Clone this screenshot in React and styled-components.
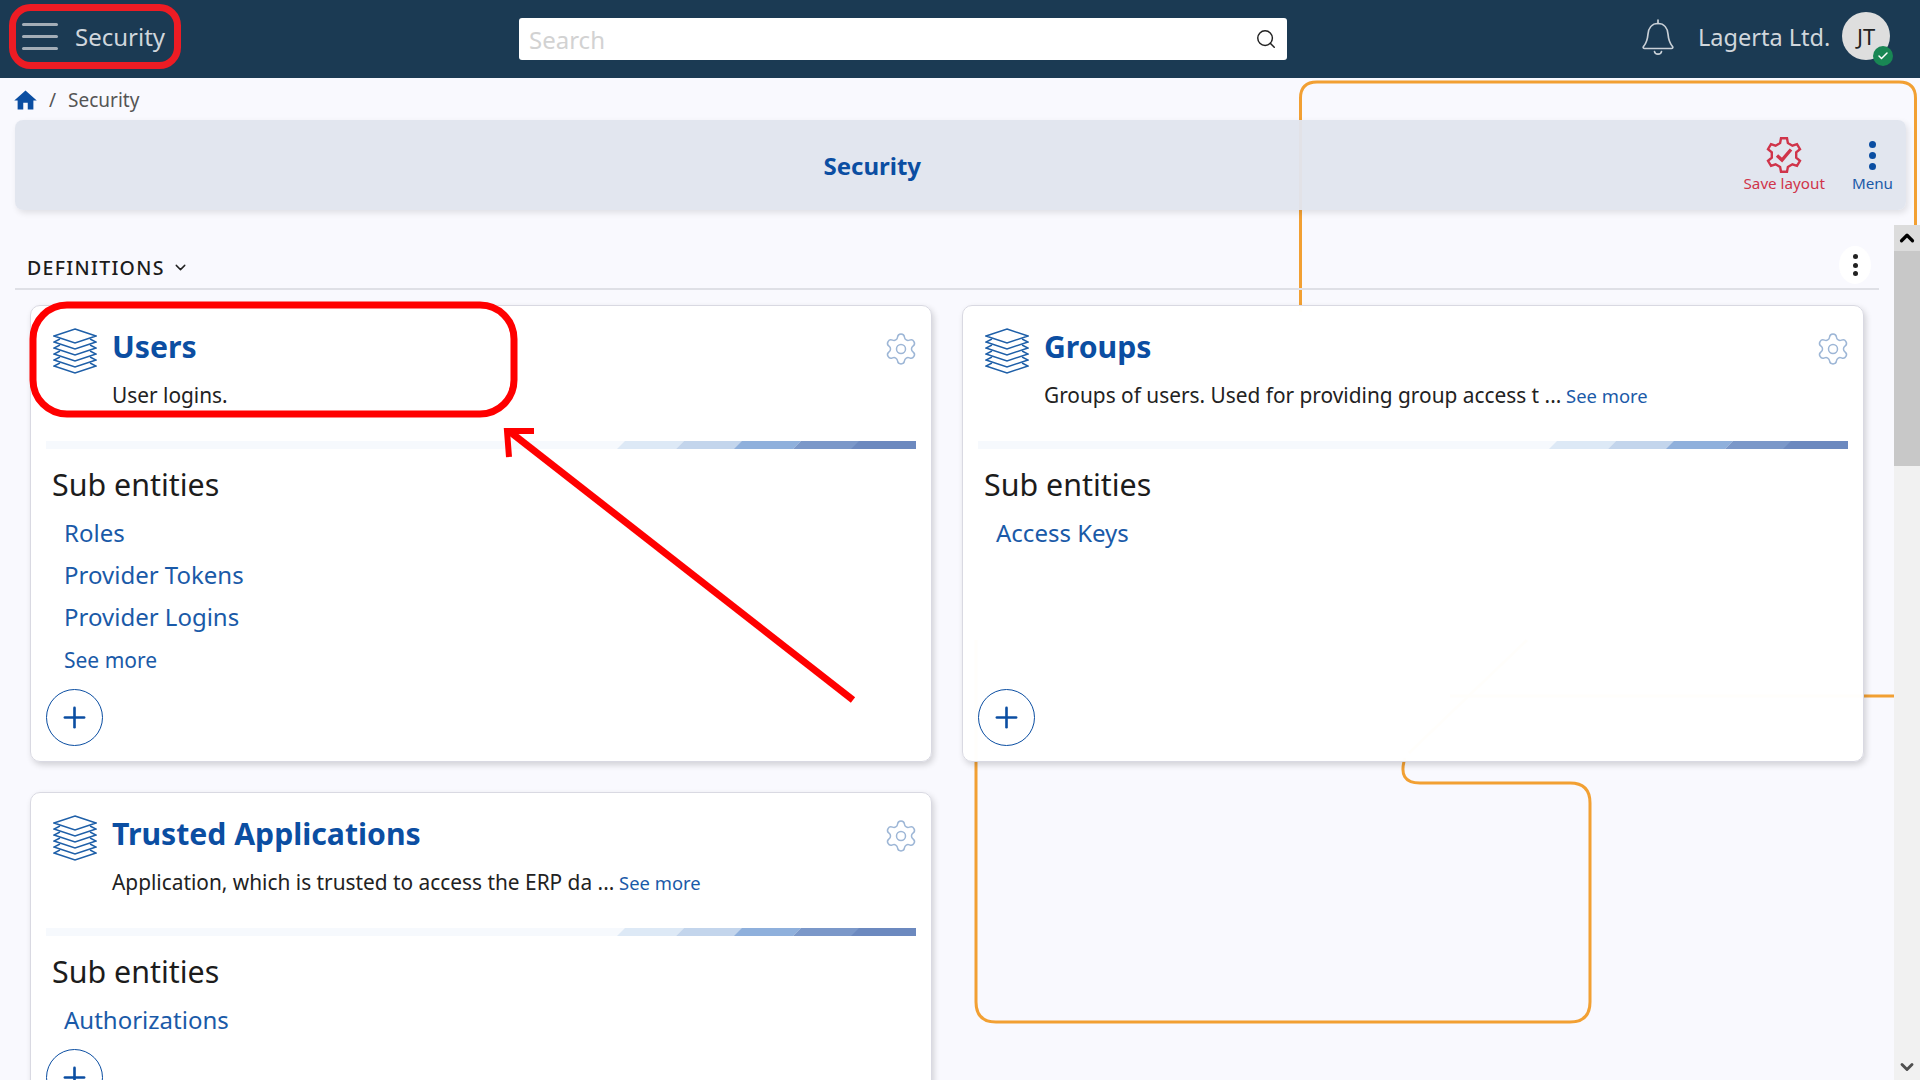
import styled, { createGlobalStyle } from 'styled-components'
import { MdHome } from 'react-icons/md'
import { Search, Settings, Plus, ChevronDown, ChevronUp, Check } from 'lucide-react'

const BLUE = '#0b4ea2'

const GlobalStyle = createGlobalStyle`
  html, body {
    margin: 0;
    padding: 0;
    height: 100%;
    overflow: hidden;
    background: #f9f9fe;
    font-family: "Noto Sans", "Open Sans", sans-serif;
  }
`

// gear outline for the save button, six square teeth
const gearPoints = () => {
  const pts = []
  for (let i = 0; i < 6; i++) {
    const a = (i * 60 - 90) * (Math.PI / 180)
    const add = (r, d) => {
      const t = a + (d * Math.PI) / 180
      pts.push(`${(18 + r * Math.cos(t)).toFixed(1)},${(18 + r * Math.sin(t)).toFixed(1)}`)
    }
    add(12.5, -18)
    add(17, -10)
    add(17, 10)
    add(12.5, 18)
  }
  return pts.join(' ')
}

const StackIcon = () => (
  <StackSvg viewBox="0 0 44 46" fill="none" stroke="#1e5fa8" strokeWidth="1.4">
    <path d="M22 1 L43 8 L22 15 L1 8 Z" />
    <path d="M7 11 L1 14 L22 21 L43 14 L37 11" />
    <path d="M7 17 L1 20 L22 27 L43 20 L37 17" />
    <path d="M7 23 L1 26 L22 33 L43 26 L37 23" />
    <path d="M7 29 L1 32 L22 39 L43 32 L37 29" />
    <path d="M7 35 L1 38 L22 45 L43 38 L37 35" />
  </StackSvg>
)

const BellIcon = () => (
  <BellSvg viewBox="0 0 32 37" fill="none" stroke="#c9d0d7" strokeWidth="1.7" strokeLinecap="round" strokeLinejoin="round">
    <path d="M16 1 V4.5" />
    <path d="M16 4.5 C9.5 4.5 6.5 9.5 6 15 C5.5 21 4.5 24 1.5 27.5 C0.8 28.5 1.4 29.5 2.5 29.5 H29.5 C30.6 29.5 31.2 28.5 30.5 27.5 C27.5 24 26.5 21 26 15 C25.5 9.5 22.5 4.5 16 4.5 Z" />
    <path d="M12.5 32.5 C13 36 19 36 19.5 32.5" />
  </BellSvg>
)

const Card = ({ title, description, links, seeMore }) => (
  <CardBox>
    <CardHead>
      <StackIcon />
      <CardText>
        <CardTitle>{title}</CardTitle>
        <CardDesc>
          {description}
          {description.endsWith('...') && <InlineMore> See more</InlineMore>}
        </CardDesc>
      </CardText>
      <GearButton>
        <Settings size={36} strokeWidth={1} color="#9db6d6" />
      </GearButton>
    </CardHead>
    <Stripe>
      <StripeStep $tone="#dde9f6" />
      <StripeStep $tone="#c3d5ec" />
      <StripeStep $tone="#8fb0dc" />
      <StripeStep $tone="#7b98c9" />
      <StripeStep $tone="#6c89bf" />
    </Stripe>
    <SubTitle>Sub entities</SubTitle>
    <LinkList>
      {links.map((l) => (
        <SubLink key={l}>{l}</SubLink>
      ))}
      {seeMore && <SeeMore>See more</SeeMore>}
    </LinkList>
    <AddButton>
      <Plus size={33} strokeWidth={1.9} color={BLUE} />
    </AddButton>
  </CardBox>
)

function App() {
  return (
    <Page>
      <GlobalStyle />
      <OrangeLines viewBox="0 0 1920 1080" fill="none" stroke="#f2a033" strokeWidth="3">
        <path d="M1915.5 240 V98 Q1915.5 82 1899 82 H1317 Q1300.5 82 1300.5 98 V312" />
        <path d="M1894 696 H1450" />
        <path d="M1527 640 L1409 753" />
        <path d="M1405 758 Q1397 783 1420 783 H1570 Q1590 783 1590 803 V1002 Q1590 1022 1570 1022 H996 Q976 1022 976 1002 V640" />
      </OrangeLines>

      <TopBar>
        <TopLeft>
          <Burger>
            <span />
            <span />
            <span />
          </Burger>
          <AppName>Security</AppName>
        </TopLeft>
        <SearchBox>
          <SearchText>Search</SearchText>
          <Search size={22} strokeWidth={1.6} color="#222" />
        </SearchBox>
        <TopRight>
          <BellIcon />
          <Company>Lagerta Ltd.</Company>
          <Avatar>
            JT
            <AvatarBadge>
              <Check size={12} strokeWidth={3} color="#fff" />
            </AvatarBadge>
          </Avatar>
        </TopRight>
      </TopBar>

      <Breadcrumb>
        <MdHome size={27} color={BLUE} />
        <Slash>/</Slash>
        <Crumb>Security</Crumb>
      </Breadcrumb>

      <TitleBar>
        <PageTitle>Security</PageTitle>
        <Actions>
          <ActionButton $color="#d0344a">
            <IconSlot>
              <svg width="36" height="36" viewBox="0 0 36 36" fill="none">
                <polygon points={gearPoints()} stroke="#d0344a" strokeWidth="2.4" strokeLinejoin="miter" />
                <path d="M11 18.5 L16 23 L25 12.5" stroke="#d0344a" strokeWidth="3.4" />
              </svg>
            </IconSlot>
            <ActionLabel>Save layout</ActionLabel>
          </ActionButton>
          <ActionButton $color="#1a5aa8">
            <IconSlot>
              <MenuDots $size={7} $gap={4} $color={BLUE}>
                <i />
                <i />
                <i />
              </MenuDots>
            </IconSlot>
            <ActionLabel>Menu</ActionLabel>
          </ActionButton>
        </Actions>
      </TitleBar>

      <ScrollArea>
        <Content>
          <SectionRow>
            <SectionName>
              DEFINITIONS
              <ChevronDown size={17} strokeWidth={2} color="#222" />
            </SectionName>
            <SectionMenu>
              <MenuDots $size={5} $gap={3.5} $color="#222">
                <i />
                <i />
                <i />
              </MenuDots>
            </SectionMenu>
          </SectionRow>
          <CardGrid>
            <Card title="Users" description="User logins." links={['Roles', 'Provider Tokens', 'Provider Logins']} seeMore />
            <Card title="Groups" description="Groups of users. Used for providing group access t ..." links={['Access Keys']} />
            <Card title="Trusted Applications" description="Application, which is trusted to access the ERP da ..." links={['Authorizations']} />
          </CardGrid>
        </Content>
        <ScrollBar>
          <ScrollEnd $bg="#dcdcdc">
            <ChevronUp size={22} strokeWidth={3.5} color="#000" />
          </ScrollEnd>
          <ScrollThumb />
          <ScrollTrack />
          <ScrollEnd $bg="#f1f1f1">
            <ChevronDown size={20} strokeWidth={3.5} color="#505050" />
          </ScrollEnd>
        </ScrollBar>
      </ScrollArea>

      <Annotations viewBox="0 0 1920 1080" fill="none">
        <rect x="12.5" y="7.5" width="165" height="58" rx="18" stroke="#ed1c24" strokeWidth="7" />
        <rect x="33" y="305" width="481" height="109" rx="34" stroke="#ff0000" strokeWidth="7" />
        <path d="M853 700 L509 431" stroke="#ff0000" strokeWidth="7" />
        <path d="M534 431 H507 L509 457" stroke="#ff0000" strokeWidth="6" />
      </Annotations>
    </Page>
  )
}

const Page = styled.div`
  position: relative;
  display: flex;
  flex-direction: column;
  width: 1920px;
  height: 1080px;
  overflow: hidden;
`

const OrangeLines = styled.svg`
  position: absolute;
  inset: 0;
  width: 1920px;
  height: 1080px;
  z-index: 0;
`

const Annotations = styled.svg`
  position: absolute;
  inset: 0;
  width: 1920px;
  height: 1080px;
  z-index: 5;
  pointer-events: none;
`

const TopBar = styled.header`
  position: relative;
  z-index: 1;
  flex: 0 0 78px;
  display: flex;
  align-items: center;
  background: #1b3a53;
  color: #d0d6dc;
`

const TopLeft = styled.div`
  display: flex;
  align-items: center;
  width: 519px;
  padding-left: 22px;
  box-sizing: border-box;
  gap: 17px;
  margin-top: -5px;
`

const Burger = styled.div`
  display: flex;
  flex-direction: column;
  gap: 9px;
  width: 36px;
  span {
    display: block;
    height: 3px;
    border-radius: 2px;
    background: #a3adb7;
  }
`

const AppName = styled.div`
  font-size: 24px;
  line-height: 32px;
`

const SearchBox = styled.div`
  display: flex;
  align-items: center;
  justify-content: space-between;
  width: 768px;
  height: 42px;
  box-sizing: border-box;
  padding: 0 10px;
  background: #fff;
  border-radius: 3px;
`

const SearchText = styled.span`
  font-size: 24px;
  color: #d2d2d2;
`

const TopRight = styled.div`
  flex: 1;
  display: flex;
  align-items: center;
  padding-left: 355px;
  margin-top: -6px;
`

const BellSvg = styled.svg`
  width: 32px;
  height: 37px;
  flex: none;
  margin-top: 3px;
`

const Company = styled.div`
  font-size: 23.5px;
  margin: 1px 0 0 24px;
  white-space: nowrap;
`

const Avatar = styled.div`
  position: relative;
  flex: none;
  width: 48px;
  height: 48px;
  margin-left: 12px;
  border-radius: 50%;
  background: #dedede;
  color: #222;
  font-size: 22px;
  display: flex;
  align-items: center;
  justify-content: center;
`

const AvatarBadge = styled.span`
  position: absolute;
  right: -3px;
  bottom: -6px;
  width: 20px;
  height: 20px;
  border-radius: 50%;
  background: #198754;
  display: flex;
  align-items: center;
  justify-content: center;
`

const Breadcrumb = styled.nav`
  position: relative;
  z-index: 1;
  flex: 0 0 42px;
  display: flex;
  align-items: center;
  padding: 2px 0 0 12px;
  box-sizing: border-box;
  font-size: 19px;
  color: #555;
`

const Slash = styled.span`
  margin: 0 12px 0 10px;
`

const Crumb = styled.span``

const TitleBar = styled.div`
  position: relative;
  z-index: 1;
  flex: 0 0 90px;
  margin: 0 14px 0 15px;
  display: flex;
  align-items: center;
  border-radius: 8px;
  background: rgba(225, 229, 238, 0.96);
  box-shadow: 2px 3px 6px rgba(0, 0, 0, 0.1);
`

const PageTitle = styled.h1`
  flex: 1;
  margin: 0;
  text-align: center;
  font-size: 24px;
  font-weight: 700;
  color: ${BLUE};
`

const Actions = styled.div`
  display: flex;
  align-items: flex-start;
  gap: 27px;
  padding: 0 13px 0 14px;
`

const ActionButton = styled.div`
  display: flex;
  flex-direction: column;
  align-items: center;
  color: ${(p) => p.$color};
`

const IconSlot = styled.div`
  height: 36px;
  display: flex;
  align-items: center;
  justify-content: center;
`

const ActionLabel = styled.span`
  font-size: 15.2px;
  line-height: 20px;
  white-space: nowrap;
`

const MenuDots = styled.div`
  display: flex;
  flex-direction: column;
  align-items: center;
  gap: ${(p) => p.$gap}px;
  i {
    display: block;
    width: ${(p) => p.$size}px;
    height: ${(p) => p.$size}px;
    border-radius: 50%;
    background: ${(p) => p.$color};
  }
`

const ScrollArea = styled.div`
  position: relative;
  z-index: 1;
  flex: 1;
  margin-top: 15px;
  display: flex;
  min-height: 0;
`

const Content = styled.main`
  flex: 1;
  min-width: 0;
  overflow: hidden;
  padding-left: 15px;
`

const SectionRow = styled.div`
  height: 65px;
  width: 1864px;
  display: flex;
  align-items: flex-end;
  justify-content: space-between;
  padding: 0 8px 4px 12px;
  box-sizing: border-box;
  border-bottom: 2px solid #dfe0e6;
`

const SectionName = styled.div`
  display: flex;
  align-items: center;
  gap: 7px;
  height: 32px;
  margin-bottom: 1px;
  font-size: 19.5px;
  font-weight: 500;
  letter-spacing: 1.3px;
  color: #1c1c1c;
`

const SectionMenu = styled.div`
  width: 32px;
  height: 38px;
  border-radius: 50%;
  background: #fff;
  display: flex;
  align-items: center;
  justify-content: center;
`

const CardGrid = styled.div`
  display: grid;
  grid-template-columns: 902px 902px;
  column-gap: 30px;
  row-gap: 30px;
  margin: 15px 0 0 15px;
`

const CardBox = styled.section`
  display: flex;
  flex-direction: column;
  box-sizing: border-box;
  padding: 0 15px 15px;
  background: rgba(255, 255, 255, 0.985);
  border: 1px solid #d9d9e2;
  border-radius: 10px;
  box-shadow: 2px 3px 6px rgba(0, 0, 0, 0.16);
`

const CardHead = styled.div`
  display: flex;
  align-items: flex-start;
  height: 135px;
  padding-top: 22px;
  box-sizing: border-box;
  flex: none;
`

const StackSvg = styled.svg`
  flex: none;
  width: 44px;
  height: 46px;
  margin: 0 0 0 7px;
`

const CardText = styled.div`
  flex: 1;
  min-width: 0;
  margin-left: 15px;
`

const CardTitle = styled.h2`
  margin: 0;
  font-size: 30.2px;
  line-height: 38px;
  font-weight: 700;
  color: ${BLUE};
`

const CardDesc = styled.p`
  margin: 15px 0 0;
  font-size: 20.85px;
  line-height: 28px;
  color: #222;
`

const InlineMore = styled.span`
  font-size: 18.4px;
  color: #1a5aa8;
`

const GearButton = styled.div`
  flex: none;
  margin: 3px -3px 0 0;
`

const Stripe = styled.div`
  flex: none;
  height: 8px;
  display: flex;
  justify-content: flex-end;
  overflow: hidden;
  background: #f6f9fd;
`

const StripeStep = styled.span`
  display: block;
  flex: none;
  width: 58.5px;
  height: 8px;
  background: ${(p) => p.$tone};
  transform: skewX(-45deg);
  &:last-child {
    width: 66px;
    margin-right: -5px;
  }
`

const SubTitle = styled.h3`
  margin: 16px 0 0 6px;
  font-size: 30.4px;
  line-height: 40px;
  font-weight: 400;
  color: #1c1c1c;
`

const LinkList = styled.div`
  display: flex;
  flex-direction: column;
  margin: 7px 0 8px 18px;
`

const SubLink = styled.a`
  font-size: 24px;
  line-height: 42px;
  color: #1a5aa8;
`

const SeeMore = styled.a`
  font-size: 21px;
  line-height: 42px;
  padding-top: 1px;
  color: #1a5aa8;
`

const AddButton = styled.button`
  width: 57px;
  height: 57px;
  margin-top: auto;
  padding: 0;
  flex: none;
  border: 1px solid ${BLUE};
  border-radius: 50%;
  background: #fff;
  display: flex;
  align-items: center;
  justify-content: center;
`

const ScrollBar = styled.aside`
  flex: 0 0 26px;
  display: flex;
  flex-direction: column;
  background: #f1f1f1;
`

const ScrollEnd = styled.div`
  flex: 0 0 26px;
  display: flex;
  align-items: center;
  justify-content: center;
  background: ${(p) => p.$bg};
`

const ScrollThumb = styled.div`
  flex: 0 0 215px;
  background: #c8c8c8;
`

const ScrollTrack = styled.div`
  flex: 1;
`

export default App
